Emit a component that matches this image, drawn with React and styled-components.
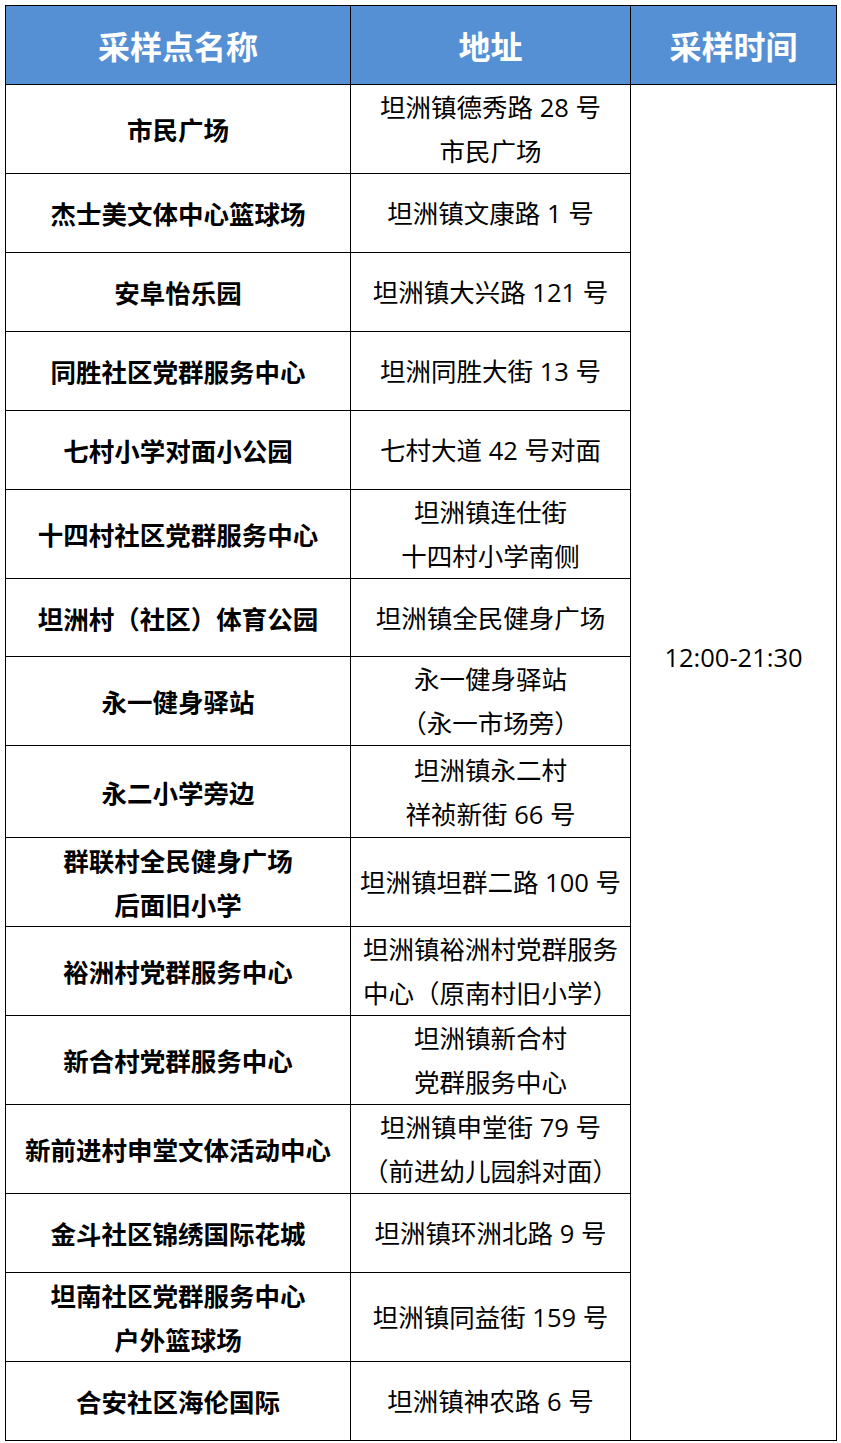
import React from "react";
import styled, { createGlobalStyle } from "styled-components";

const GlobalStyle = createGlobalStyle`
  html, body {
    margin: 0;
    padding: 0;
    background: #ffffff;
  }
  body {
    font-family: "Open Sans", "Noto Sans CJK SC", sans-serif;
  }
`;

const Page = styled.div`
  width: 841px;
  height: 1443px;
  padding: 5px 0 0 5px;
  box-sizing: border-box;
  background: #ffffff;
`;

const Table = styled.table`
  border-collapse: collapse;
  table-layout: fixed;
  width: 831px;
  color: #000;
`;

const HeadCell = styled.th`
  background: #5590d4;
  color: #ffffff;
  font-family: "Noto Sans CJK SC", sans-serif;
  font-weight: 700;
  font-size: 32px;
  height: 78px;
  padding: 0;
  border: 1.5px solid #000;
  text-align: center;
  vertical-align: middle;
`;

const Row = styled.tr`
  height: ${(p) => p.$h}px;
`;

const NameCell = styled.td`
  border: 1.5px solid #000;
  padding: 0 2px;
  text-align: center;
  vertical-align: middle;
  font-family: "Noto Sans CJK SC", sans-serif;
  font-weight: 700;
  font-size: 25.5px;
  line-height: 44px;
  white-space: nowrap;
`;

const AddrCell = styled.td`
  border: 1.5px solid #000;
  padding: 0 2px;
  text-align: center;
  vertical-align: middle;
  font-family: "Open Sans", "Noto Sans CJK SC", sans-serif;
  font-weight: 400;
  font-size: 25.5px;
  line-height: 44px;
  white-space: nowrap;
`;

const TimeCell = styled.td`
  border: 1.5px solid #000;
  padding: 550px 0 0;
  text-align: center;
  vertical-align: top;
  font-family: "Open Sans", sans-serif;
  font-size: 25.5px;
  line-height: 44px;
`;

const rows = [
  { h: 89, name: ["市民广场"], addr: ["坦洲镇德秀路 28 号", "市民广场"] },
  { h: 79, name: ["杰士美文体中心篮球场"], addr: ["坦洲镇文康路 1 号"] },
  { h: 79, name: ["安阜怡乐园"], addr: ["坦洲镇大兴路 121 号"] },
  { h: 79, name: ["同胜社区党群服务中心"], addr: ["坦洲同胜大街 13 号"] },
  { h: 79, name: ["七村小学对面小公园"], addr: ["七村大道 42 号对面"] },
  { h: 89, name: ["十四村社区党群服务中心"], addr: ["坦洲镇连仕街", "十四村小学南侧"] },
  { h: 78, name: ["坦洲村（社区）体育公园"], addr: ["坦洲镇全民健身广场"] },
  { h: 88, name: ["永一健身驿站"], addr: ["永一健身驿站", "（永一市场旁）"] },
  { h: 92, name: ["永二小学旁边"], addr: ["坦洲镇永二村", "祥祯新街 66 号"] },
  { h: 89, name: ["群联村全民健身广场", "后面旧小学"], addr: ["坦洲镇坦群二路 100 号"] },
  { h: 89, name: ["裕洲村党群服务中心"], addr: ["坦洲镇裕洲村党群服务", "中心（原南村旧小学）"] },
  { h: 89, name: ["新合村党群服务中心"], addr: ["坦洲镇新合村", "党群服务中心"] },
  { h: 89, name: ["新前进村申堂文体活动中心"], addr: ["坦洲镇申堂街 79 号", "（前进幼儿园斜对面）"] },
  { h: 79, name: ["金斗社区锦绣国际花城"], addr: ["坦洲镇环洲北路 9 号"] },
  { h: 89, name: ["坦南社区党群服务中心", "户外篮球场"], addr: ["坦洲镇同益街 159 号"] },
  { h: 79, name: ["合安社区海伦国际"], addr: ["坦洲镇神农路 6 号"] },
];

const Lines = ({ items }) =>
  items.map((t, i) => (
    <React.Fragment key={i}>
      {i > 0 && <br />}
      {t}
    </React.Fragment>
  ));

export default function App() {
  return (
    <Page>
      <GlobalStyle />
      <Table>
        <colgroup>
          <col style={{ width: 345 }} />
          <col style={{ width: 280 }} />
          <col style={{ width: 206 }} />
        </colgroup>
        <thead>
          <tr>
            <HeadCell>采样点名称</HeadCell>
            <HeadCell>地址</HeadCell>
            <HeadCell>采样时间</HeadCell>
          </tr>
        </thead>
        <tbody>
          {rows.map((r, i) => (
            <Row key={i} $h={r.h}>
              <NameCell>
                <Lines items={r.name} />
              </NameCell>
              <AddrCell>
                <Lines items={r.addr} />
              </AddrCell>
              {i === 0 && <TimeCell rowSpan={rows.length}>12:00-21:30</TimeCell>}
            </Row>
          ))}
        </tbody>
      </Table>
    </Page>
  );
}
